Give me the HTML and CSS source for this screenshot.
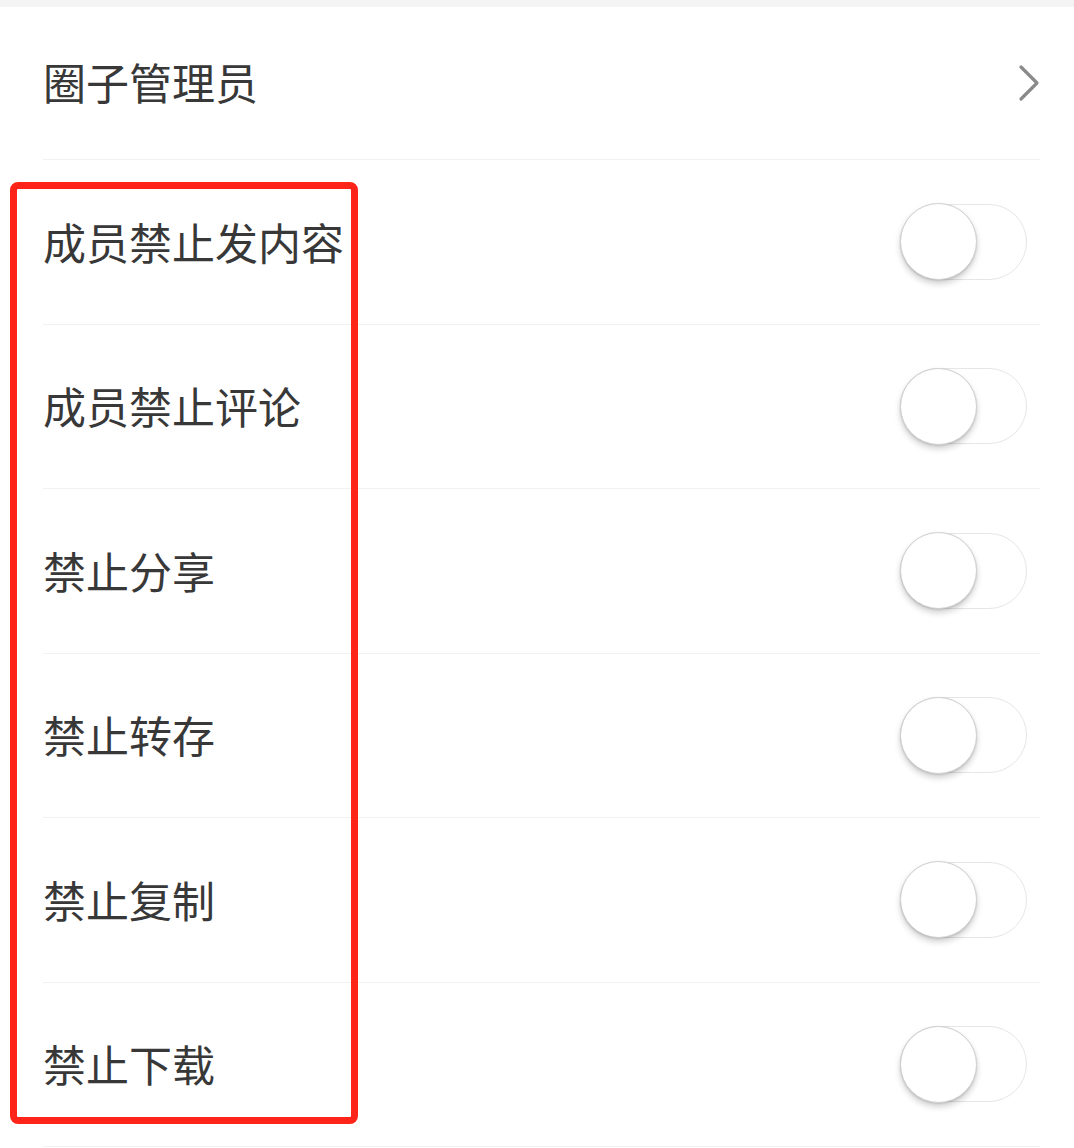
FILE: index.html
```html
<!DOCTYPE html>
<html lang="zh-CN">
<head>
<meta charset="utf-8">
<title>圈子设置</title>
<link rel="stylesheet" href="styles.css">
</head>
<body>
<div class="topbar"></div>
<div class="list">
  <div class="row row-first">
    <span class="label">圈子管理员</span>
    <svg class="chev" width="24" height="38" viewBox="0 0 24 38"><path d="M4 3 L20 19 L4 35" fill="none" stroke="#8a8a8a" stroke-width="3.2" stroke-linecap="round" stroke-linejoin="round"/></svg>
  </div>
  <div class="row"><span class="label">成员禁止发内容</span><span class="switch"><span class="knob"></span></span></div>
  <div class="row"><span class="label">成员禁止评论</span><span class="switch"><span class="knob"></span></span></div>
  <div class="row"><span class="label">禁止分享</span><span class="switch"><span class="knob"></span></span></div>
  <div class="row"><span class="label">禁止转存</span><span class="switch"><span class="knob"></span></span></div>
  <div class="row"><span class="label">禁止复制</span><span class="switch"><span class="knob"></span></span></div>
  <div class="row"><span class="label">禁止下载</span><span class="switch"><span class="knob"></span></span></div>
</div>
<div class="highlight"></div>
</body>
</html>
```
FILE: styles.css
```css
html, body {
  margin: 0;
  padding: 0;
  background: #ffffff;
}
body {
  position: relative;
  font-family: "Noto Sans CJK SC", "Noto Sans", sans-serif;
  color: #383838;
  overflow: hidden;
  height: 1148px;
}
.topbar {
  height: 7px;
  background: #f4f4f4;
}
.list {
  padding: 0 34px 0 43px;
}
.row {
  display: flex;
  align-items: center;
  justify-content: space-between;
  height: 163.5px;
  border-bottom: 1px solid #f1f1f1;
  box-sizing: content-box;
}
.row-first {
  height: 152px;
}
.label {
  font-size: 43px;
  line-height: 1;
  letter-spacing: 0;
  padding-bottom: 1px;
}
.row-first .label {
  padding-bottom: 4px;
}
.chev {
  display: block;
  margin-right: -1px;
  margin-top: 0;
}
.switch {
  position: relative;
  display: block;
  width: 127px;
  height: 76px;
  margin-right: 13px;
  border-radius: 38px;
  border: 1.5px solid #e6e6e6;
  background: #ffffff;
  box-sizing: border-box;
}
.knob {
  position: absolute;
  left: -1.5px;
  top: -1.5px;
  width: 77px;
  height: 77px;
  border-radius: 50%;
  background: #ffffff;
  border: 1px solid #d0d0d0;
  box-sizing: border-box;
  box-shadow: 0 4px 6px rgba(0,0,0,0.18), 0 1px 2px rgba(0,0,0,0.12);
}
.highlight {
  position: absolute;
  left: 10px;
  top: 182px;
  width: 348px;
  height: 942px;
  border: 7px solid #ff2419;
  border-radius: 8px;
  box-sizing: border-box;
  pointer-events: none;
}
```
